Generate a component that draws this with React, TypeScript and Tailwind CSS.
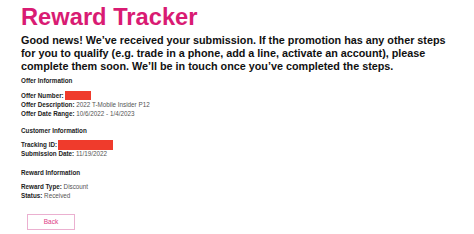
import React from "react";

const Row = ({ label, value, box }: { label: string; value?: string; box?: string }) => (
  <div className="flex items-center h-[9px] leading-[9px] whitespace-nowrap">
    <span className="font-bold text-[#222]">{label}</span>
    {box ? <span className={`inline-block bg-[#ef3b2c] ${box}`} /> : null}
    {value ? <span className="text-[#555]">&nbsp;{value}</span> : null}
  </div>
);

export default function App() {
  return (
    <div className="w-[474px] h-[234px] bg-white pl-[21px] font-['Liberation_Sans',Arial,sans-serif] overflow-hidden">
      <h1 className="pt-[4px] text-[23.7px] leading-[27px] font-bold text-[#d91b73] whitespace-nowrap">
        Reward Tracker
      </h1>
      <p className="mt-[3px] text-[10.8px] leading-[13px] font-bold text-[#111] whitespace-nowrap">
        Good news! We’ve received your submission. If the promotion has any other steps
        <br />
        for you to qualify (e.g. trade in a phone, add a line, activate an account), please
        <br />
        complete them soon. We’ll be in touch once you’ve completed the steps.
      </p>
      <div className="text-[6.3px]">
        <div className="mt-[3px] h-[9px] leading-[9px] font-bold text-[#222]">Offer Information</div>
        <div className="mt-[5.5px]">
          <Row label="Offer Number:" box="w-[26px] h-[9px] ml-[1px]" />
          <Row label="Offer Description:" value="2022 T-Mobile Insider P12" />
          <Row label="Offer Date Range:" value="10/6/2022 - 1/4/2023" />
        </div>
        <div className="mt-[8px] h-[9px] leading-[9px] font-bold text-[#222]">Customer Information</div>
        <div className="mt-[5.5px]">
          <Row label="Tracking ID:" box="w-[55px] h-[10px] ml-[1px]" />
          <Row label="Submission Date:" value="11/19/2022" />
        </div>
        <div className="mt-[10px] h-[9px] leading-[9px] font-bold text-[#222]">Reward Information</div>
        <div className="mt-[5px]">
          <Row label="Reward Type:" value="Discount" />
          <Row label="Status:" value="Received" />
        </div>
        <button className="mt-[13.5px] ml-[6px] w-[48px] h-[16px] border border-[#ebb0d0] text-[6.5px] text-[#dd3a86] flex items-center justify-center bg-white">
          Back
        </button>
      </div>
    </div>
  );
}
